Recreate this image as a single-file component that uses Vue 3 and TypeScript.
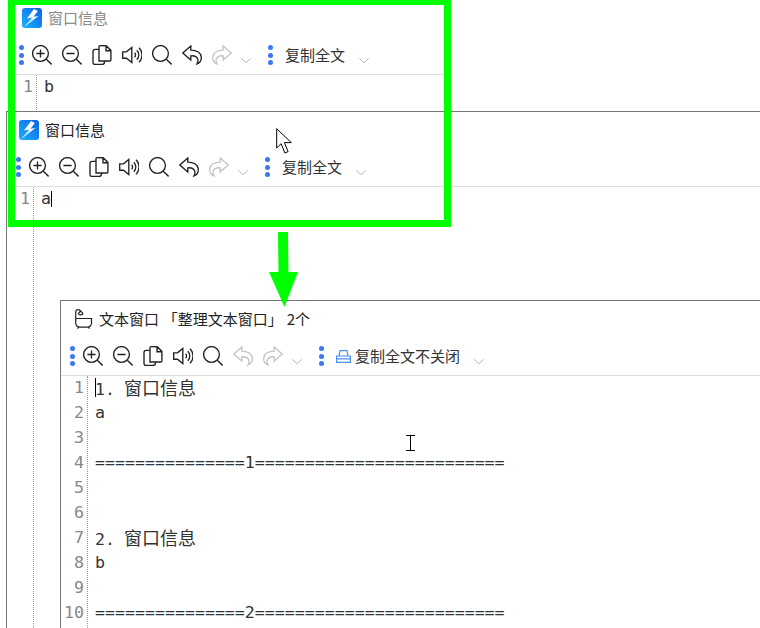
<script setup lang="ts">
interface Line { n: number; text: string; cjk?: string; caret?: boolean }
interface Win {
  id: string
  title: string
  tub?: boolean
  undoOff?: boolean
  copyLabel: string
  printer?: boolean
  lines: Line[]
}

const rule1 = '='.repeat(15) + '1' + '='.repeat(25)
const rule2 = '='.repeat(15) + '2' + '='.repeat(25)

const windows: Win[] = [
  { id: 'w1', title: '窗口信息', copyLabel: '复制全文', lines: [{ n: 1, text: 'b' }] },
  { id: 'w2', title: '窗口信息', copyLabel: '复制全文', lines: [{ n: 1, text: 'a', caret: true }] },
  {
    id: 'w3',
    title: '文本窗口 「整理文本窗口」 2个',
    tub: true,
    undoOff: true,
    copyLabel: '复制全文不关闭',
    printer: true,
    lines: [
      { n: 1, text: '1. ', cjk: '窗口信息' },
      { n: 2, text: 'a' },
      { n: 3, text: '' },
      { n: 4, text: rule1 },
      { n: 5, text: '' },
      { n: 6, text: '' },
      { n: 7, text: '2. ', cjk: '窗口信息' },
      { n: 8, text: 'b' },
      { n: 9, text: '' },
      { n: 10, text: rule2 },
    ],
  },
]

const baseIcons = ['zoom-in', 'zoom-out', 'copy', 'speaker', 'search']
</script>

<template>
  <div class="desk">
    <svg class="defs" width="0" height="0" aria-hidden="true">
      <defs>
        <linearGradient id="appgrad" x1="1" y1="0" x2="0" y2="1">
          <stop offset="0" stop-color="#0b62e8" />
          <stop offset="1" stop-color="#19b2fb" />
        </linearGradient>
        <symbol id="zoom-in" viewBox="0 0 20 20">
          <circle cx="8.500" cy="8.500" r="7.900" />
          <path d="M14.300 14.300 19.600 19.400M8.500 4.400v8.200M4.400 8.500h8.200" />
        </symbol>
        <symbol id="zoom-out" viewBox="0 0 20 20">
          <circle cx="8.500" cy="8.500" r="7.900" />
          <path d="M14.300 14.300 19.600 19.400M4.400 8.500h8.200" />
        </symbol>
        <symbol id="copy" viewBox="0 0 20 20">
          <path d="M7 16V1.800A1 1 0 0 1 8 .7h6.200l4.700 4.700v9.600a1 1 0 0 1-1 1zM14 .7v5h4.900" />
          <path d="M7 4.300H3.200A2.200 2.200 0 0 0 1 6.500v11a2 2 0 0 0 2 2h7a2.500 2.500 0 0 0 2.500-2.500v-1" />
        </symbol>
        <symbol id="speaker" viewBox="0 0 20 20">
          <path d="M.7 6.800h3.800l5.300-4.300v15l-5.300-4.300H.7z" />
          <path d="M12.600 7.800a3 3 0 0 1 0 4.400M14.800 5.300a6.500 6.500 0 0 1 0 9.400M17 2.800a10 10 0 0 1 0 14.400" />
        </symbol>
        <symbol id="search" viewBox="0 0 20 20">
          <circle cx="8.500" cy="8.500" r="7.900" />
          <path d="M14.300 14.300 19.600 19.400" />
        </symbol>
        <symbol id="undo" viewBox="0 0 20 20">
          <path d="M8.800 1 .8 8l8 7v-4.200c3.500-.4 6 .8 6.900 3.200.5 1.400.2 3.300-.7 4.900 3.200-1.300 4.600-4.200 4.200-7.200C18.700 7.500 14.300 5 8.800 5.100z" />
        </symbol>
      </defs>
    </svg>

    <section v-for="w in windows" :key="w.id" class="win" :class="w.id">
      <header class="title">
        <svg v-if="w.tub" class="app" viewBox="0 0 20 20">
          <path class="tub" d="M2.700 9.500h16.500M2.700 9.500v4.500a4.200 4.200 0 0 0 4.200 4.200h7.400a4.200 4.200 0 0 0 4.200-4.200V9.500M5.500 18.200l-1 1.500M15.500 18.200l1 1.500M2.700 9.500V3a2.400 2.400 0 0 1 2.500-2.400c1 0 1.800.5 2.300 1.400" />
          <path class="tub" d="M5.300 4.600 7.500 2l2.200 2.200c.5.800-.7 1.500-1.400 1.300-.4.700-2.600.2-3-.9z" />
        </svg>
        <svg v-else class="app" viewBox="0 0 20 20">
          <rect width="20" height="20" rx="3" fill="url(#appgrad)" />
          <path fill="#fff" d="M12 1 5 10.500l5.300-.9L2.500 18.500l14-10.500-5 .7L15.800 3z" />
          <path fill="#a8e2ff" d="M10.300 9.600 2.500 18.500l8.500-6z" />
        </svg>
        <span class="name">{{ w.title }}</span>
      </header>

      <nav class="bar">
        <i class="dots"><b /><b /><b /></i>
        <svg v-for="ic in baseIcons" :key="ic" class="tool"><use :href="'#' + ic" /></svg>
        <svg class="tool" :class="{ off: w.undoOff }"><use href="#undo" /></svg>
        <svg class="tool off redo"><use href="#undo" /></svg>
        <svg class="chev" viewBox="0 0 10 5"><path d="M.3.300 5 4.700 9.700.300" /></svg>
        <i class="dots second"><b /><b /><b /></i>
        <svg v-if="w.printer" class="printer" viewBox="0 0 15 13">
          <path d="M3 6 4 .7h7L12 6M.6 6h13.800v6.400H.6zM.6 8.800h13.800" />
        </svg>
        <span class="label">{{ w.copyLabel }}</span>
        <svg class="chev last" viewBox="0 0 10 5"><path d="M.3.300 5 4.700 9.700.300" /></svg>
      </nav>

      <div class="editor">
        <div class="gutter">
          <div v-for="l in w.lines" :key="l.n" class="num">{{ l.n }}</div>
        </div>
        <div class="text">
          <div v-for="l in w.lines" :key="l.n" class="row">
            <i v-if="w.tub && l.n === 1" class="caret tall" />{{ l.text }}<span v-if="l.cjk" class="cjk">{{ l.cjk }}</span><i v-if="l.caret" class="caret" />
          </div>
        </div>
      </div>
    </section>

    <div class="frame" />

    <svg class="arrow" viewBox="0 0 760 628">
      <path d="M278 232h10l.5 40H298l-13.500 35L269 272h9.500z" />
    </svg>

    <svg class="pointer" viewBox="0 0 17 26">
      <path d="M.7.700V20l4.400-4.300 3.800 9.300 3.200-1.400-3.700-9H15.300z" />
    </svg>

    <svg class="ibeam" viewBox="0 0 9 16">
      <path d="M0 .5h9M0 15.500h9M4.500.5v15" />
    </svg>
  </div>
</template>

<style>
html, body { margin: 0; background: #fff; }
</style>

<style scoped>
.desk {
  position: relative;
  width: 760px;
  height: 628px;
  overflow: hidden;
  background: #fff;
  font-family: "Noto Sans CJK SC", "Noto Sans", sans-serif;
}
.defs { position: absolute; }

.win {
  position: absolute;
  box-sizing: border-box;
  display: flex;
  flex-direction: column;
  background: #fff;
  border: 1px solid #777;
}
.w1 { left: 9px; top: -1px; width: 437px; height: 114px; }
.w2 { left: 6px; top: 111px; right: -5px; bottom: -5px; }
.w3 { left: 60px; top: 300px; right: -5px; bottom: -5px; }

.title {
  display: flex;
  align-items: center;
  gap: 6px;
  height: 36px;
  padding-left: 12px;
  flex: none;
}
.app { width: 20px; height: 20px; flex: none; }
.tub { fill: none; stroke: #222; stroke-width: 1.200; }
.name { font-size: 15px; line-height: 20px; color: #222; white-space: pre; }
.w1 .name { color: #8a8a8a; }
.w3 .name { word-spacing: 0.500px; }

.bar {
  display: flex;
  align-items: center;
  box-sizing: border-box;
  height: 39px;
  flex: none;
  padding-left: 9px;
  border-bottom: 1px solid #ddd;
}
.dots {
  display: flex;
  flex-direction: column;
  justify-content: space-between;
  width: 5px;
  height: 20px;
  flex: none;
  margin-right: 8px;
}
.dots b { display: block; width: 5px; height: 5px; border-radius: 50%; background: #3b78f2; }
.dots.second { margin-left: 17px; margin-right: 12px; }

.tool {
  width: 20px;
  height: 20px;
  margin-right: 10px;
  flex: none;
  fill: none;
  stroke: #222;
  stroke-width: 1.350;
}
.tool.off { stroke: #c4c4c4; }
.redo { transform: scaleX(-1); }

.chev {
  width: 10px;
  height: 5px;
  margin-top: 11px;
  margin-left: -1px;
  flex: none;
  fill: none;
  stroke: #b5b5b5;
  stroke-width: 1;
}
.chev.last { margin-left: 14px; }

.printer {
  width: 15px;
  height: 13px;
  margin-right: 4px;
  flex: none;
  fill: none;
  stroke: #4a90f0;
  stroke-width: 1.200;
}
.label { font-size: 15px; line-height: 20px; color: #333; white-space: nowrap; }

.editor { display: flex; flex: 1; min-height: 0; }
.gutter {
  box-sizing: border-box;
  width: 27px;
  flex: none;
  padding-right: 3px;
  border-right: 1px dotted #999;
  font-family: "DejaVu Sans Mono", monospace;
  font-size: 16.600px;
  color: #888;
  text-align: right;
}
.num { height: 25px; line-height: 23px; }
.text {
  padding-left: 7px;
  font-family: "DejaVu Sans Mono", "Noto Sans CJK SC", monospace;
  font-size: 16.600px;
  color: #333;
  white-space: pre;
}
.row { height: 25px; line-height: 23px; position: relative; }
.cjk { font-family: "Noto Sans CJK SC", sans-serif; font-size: 18px; margin-left: -1px; }
.caret {
  display: inline-block;
  width: 1px;
  height: 16px;
  background: #000;
  vertical-align: -3px;
}
.caret.tall {
  position: absolute;
  left: 0;
  top: 2px;
  height: 19px;
}

.frame {
  position: absolute;
  left: 8px;
  top: -2px;
  width: 443px;
  height: 229px;
  box-sizing: border-box;
  border: 7px solid #00ff00;
}
.arrow {
  position: absolute;
  left: 0;
  top: 0;
  width: 760px;
  height: 628px;
  fill: #00ff00;
}
.pointer {
  position: absolute;
  left: 276px;
  top: 128px;
  width: 17px;
  height: 26px;
  fill: #fff;
  stroke: #000;
  stroke-width: 1;
}
.ibeam {
  position: absolute;
  left: 406px;
  top: 435px;
  width: 9px;
  height: 16px;
  fill: none;
  stroke: #000;
  stroke-width: 1;
}
</style>
